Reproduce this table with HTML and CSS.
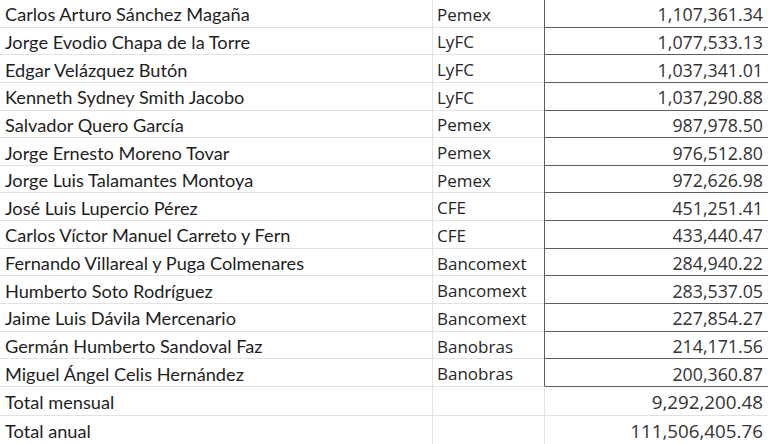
FILE: index.html
```html
<!DOCTYPE html>
<html lang="es">
<head>
<meta charset="utf-8">
<link rel="stylesheet" href="styles.css">
</head>
<body>
<div class="sheet">
  <div class="row"><div class="c name">Carlos Arturo Sánchez Magaña</div><div class="c org">Pemex</div><div class="c amt">1,107,361.34</div></div>
  <div class="row"><div class="c name">Jorge Evodio Chapa de la Torre</div><div class="c org">LyFC</div><div class="c amt">1,077,533.13</div></div>
  <div class="row"><div class="c name">Edgar Velázquez Butón</div><div class="c org">LyFC</div><div class="c amt">1,037,341.01</div></div>
  <div class="row"><div class="c name">Kenneth Sydney Smith Jacobo</div><div class="c org">LyFC</div><div class="c amt">1,037,290.88</div></div>
  <div class="row"><div class="c name">Salvador Quero García</div><div class="c org">Pemex</div><div class="c amt">987,978.50</div></div>
  <div class="row"><div class="c name">Jorge Ernesto Moreno Tovar</div><div class="c org">Pemex</div><div class="c amt">976,512.80</div></div>
  <div class="row"><div class="c name">Jorge Luis Talamantes Montoya</div><div class="c org">Pemex</div><div class="c amt">972,626.98</div></div>
  <div class="row"><div class="c name">José Luis Lupercio Pérez</div><div class="c org">CFE</div><div class="c amt">451,251.41</div></div>
  <div class="row"><div class="c name">Carlos Víctor Manuel Carreto y Fern</div><div class="c org">CFE</div><div class="c amt">433,440.47</div></div>
  <div class="row"><div class="c name">Fernando Villareal y Puga Colmenares</div><div class="c org">Bancomext</div><div class="c amt">284,940.22</div></div>
  <div class="row"><div class="c name">Humberto Soto Rodríguez</div><div class="c org">Bancomext</div><div class="c amt">283,537.05</div></div>
  <div class="row"><div class="c name">Jaime Luis Dávila Mercenario</div><div class="c org">Bancomext</div><div class="c amt">227,854.27</div></div>
  <div class="row"><div class="c name">Germán Humberto Sandoval Faz</div><div class="c org">Banobras</div><div class="c amt">214,171.56</div></div>
  <div class="row"><div class="c name">Miguel Ángel Celis Hernández</div><div class="c org">Banobras</div><div class="c amt">200,360.87</div></div>
  <div class="row total"><div class="c name">Total mensual</div><div class="c org"></div><div class="c amt">9,292,200.48</div></div>
  <div class="row total"><div class="c name">Total anual</div><div class="c org"></div><div class="c amt">111,506,405.76</div></div>
</div>
</body>
</html>
```

FILE: styles.css
```css
html, body {
  margin: 0;
  padding: 0;
  background: #ffffff;
}

.sheet {
  width: 780px;
  height: 445px;
  margin-top: -1px;
  display: grid;
  grid-template-rows: repeat(16, 1fr);
  overflow: hidden;
}

.row {
  display: grid;
  grid-template-columns: 432px 112px 236px;
  box-sizing: border-box;
  border-top: 1px solid #e2e2e2;
}

.c {
  display: flex;
  align-items: center;
  box-sizing: border-box;
  white-space: nowrap;
  overflow: hidden;
  color: #222222;
  padding-top: 2px;
}

.name {
  font-family: "Lato", "Liberation Sans", sans-serif;
  font-size: 18.2px;
  padding-left: 5px;
  color: #1e1e1e;
}

.org {
  font-family: "Open Sans", "Noto Sans", sans-serif;
  font-size: 17px;
  padding-left: 4px;
  border-left: 1px solid #e2e2e2;
  color: #262626;
}

.amt {
  font-family: "Open Sans", "Noto Sans", sans-serif;
  font-size: 17.8px;
  justify-content: flex-end;
  padding-right: 17px;
  border-left: 1px solid #5e5e5e;
  color: #333333;
}

.row:not(.total) .amt {
  border-top: 1px solid #5e5e5e;
  margin-top: -1px;
}

.row.total:nth-last-child(2) .amt {
  border-top: 1px solid #5e5e5e;
  margin-top: -1px;
}

.total .amt {
  font-size: 18.8px;
  border-left-color: #e2e2e2;
}
```
